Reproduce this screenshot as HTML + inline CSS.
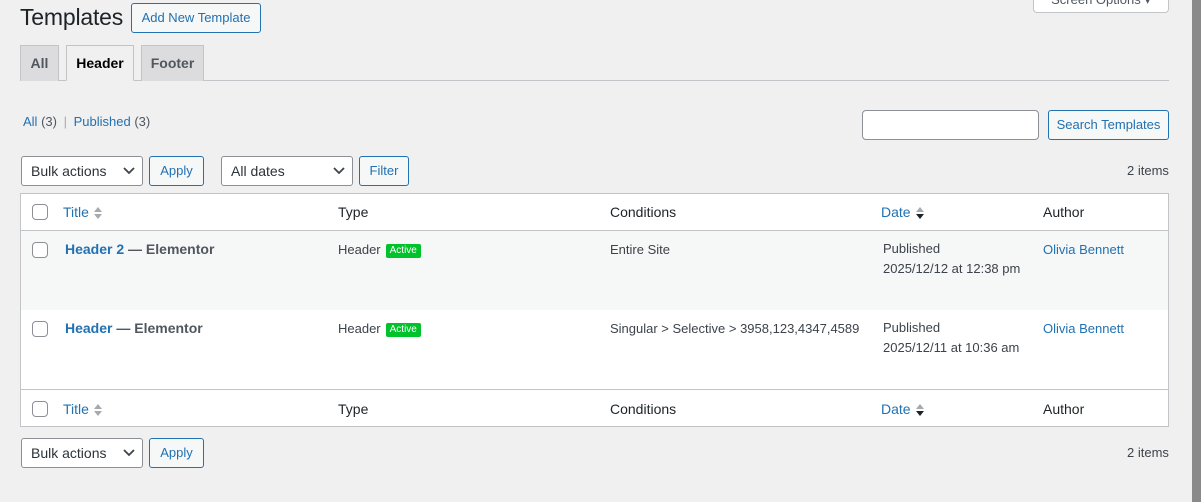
<!DOCTYPE html>
<html><head><meta charset="utf-8"><style>
*{box-sizing:border-box;margin:0;padding:0}
body{width:1201px;height:502px;background:#f0f0f1;font-family:"Liberation Sans",sans-serif;font-size:13px;color:#3c434a;position:relative;overflow:hidden}
.a{position:absolute;white-space:nowrap}
.btn{position:absolute;border:1px solid #2271b1;color:#2271b1;background:#f6f7f7;border-radius:3px;text-align:center;font-size:13px}
.sel{position:absolute;border:1px solid #8c8f94;background:#fff;border-radius:3px;color:#2c3338;font-size:14px;padding-left:9px}
.sel svg{position:absolute;right:7px;top:10px}
.link{color:#2271b1}
.cb{position:absolute;width:16px;height:16px;border:1px solid #8c8f94;border-radius:4px;background:#fff}
.sort{display:inline-block;vertical-align:middle;margin-left:4px}
.badge{display:inline-block;background:#00c22a;color:#fff;font-size:10px;padding:2px 4px;border-radius:2px;margin-left:5px;vertical-align:1px;line-height:10px}
</style></head><body>
<div class="a" style="left:20px;top:4px;font-size:23px;color:#1d2327;letter-spacing:-0.2px">Templates</div>
<div class="btn" style="left:131px;top:3px;width:130px;height:30px;line-height:28px;background:#f6f7f7">Add New Template</div>
<div class="a" style="left:1033px;top:-8px;width:136px;height:21px;background:#fff;border:1px solid #c3c4c7;border-radius:0 0 4px 4px;color:#50575e;text-align:center;line-height:14px">Screen Options ▾</div>
<div class="a" style="left:1187px;top:0;width:5px;height:502px;background:#f0f0f0"></div>
<div class="a" style="left:1192px;top:0;width:9px;height:502px;background:#8a8a8a"></div>

<div class="a" style="left:20px;top:80px;width:1149px;height:1px;background:#c3c4c7"></div>
<div class="a" style="left:20px;top:45px;width:39px;height:36px;background:#dcdcde;border:1px solid #c3c4c7;border-bottom:none;font-weight:bold;font-size:14px;color:#50575e;text-align:center;line-height:34px">All</div>
<div class="a" style="left:66px;top:45px;width:68px;height:36px;background:#f0f0f1;border:1px solid #c3c4c7;border-bottom:1px solid #f0f0f1;font-weight:bold;font-size:14px;color:#000;text-align:center;line-height:34px">Header</div>
<div class="a" style="left:141px;top:45px;width:63px;height:36px;background:#dcdcde;border:1px solid #c3c4c7;border-bottom:none;font-weight:bold;font-size:14px;color:#50575e;text-align:center;line-height:34px">Footer</div>

<div class="a" style="left:23px;top:114px"><span class="link">All</span> <span style="color:#50575e">(3)</span> <span style="color:#a7aaad;margin:0 3px">|</span> <span class="link">Published</span> <span style="color:#50575e">(3)</span></div>
<div class="a" style="left:862px;top:110px;width:177px;height:30px;background:#fff;border:1px solid #8c8f94;border-radius:4px"></div>
<div class="btn" style="left:1048px;top:110px;width:121px;height:30px;line-height:28px">Search Templates</div>

<div class="sel" style="left:21px;top:156px;width:122px;height:30px;line-height:28px">Bulk actions<svg width="12" height="8"><path d="M1 1l5 5 5-5" stroke="#3c434a" stroke-width="1.8" fill="none"/></svg></div>
<div class="btn" style="left:149px;top:156px;width:55px;height:30px;line-height:28px">Apply</div>
<div class="sel" style="left:221px;top:156px;width:132px;height:30px;line-height:28px">All dates<svg width="12" height="8"><path d="M1 1l5 5 5-5" stroke="#3c434a" stroke-width="1.8" fill="none"/></svg></div>
<div class="btn" style="left:359px;top:156px;width:50px;height:30px;line-height:28px">Filter</div>
<div class="a" style="left:1127px;top:163px">2 items</div>

<div class="a" style="left:20px;top:193px;width:1149px;height:234px;background:#fff;border:1px solid #c3c4c7"></div>
<div class="a" style="left:21px;top:230px;width:1147px;height:1px;background:#c3c4c7"></div>
<div class="a" style="left:21px;top:231px;width:1147px;height:79px;background:#f6f7f7"></div>
<div class="a" style="left:21px;top:389px;width:1147px;height:1px;background:#c3c4c7"></div>

<div class="cb" style="left:32px;top:204px"></div>
<div class="a link" style="left:63px;top:204px;font-size:14px">Title<svg class="sort" width="10" height="14"><path d="M1 6l4-5 4 5z M1 8l4 5 4-5z" fill="#a7aaad"/></svg></div>
<div class="a" style="left:338px;top:204px;font-size:14px;color:#1d2327">Type</div>
<div class="a" style="left:610px;top:204px;font-size:14px;color:#1d2327">Conditions</div>
<div class="a link" style="left:881px;top:204px;font-size:14px">Date<svg class="sort" width="10" height="14"><path d="M1 6l4-5 4 5z" fill="#a7aaad"/><path d="M1 8l4 5 4-5z" fill="#1d2327"/></svg></div>
<div class="a" style="left:1043px;top:204px;font-size:14px;color:#1d2327">Author</div>

<div class="cb" style="left:32px;top:242px"></div>
<div class="a" style="left:65px;top:241px;font-size:14px;font-weight:bold;color:#50575e"><span class="link">Header 2</span> — Elementor</div>
<div class="a" style="left:338px;top:242px">Header<span class="badge">Active</span></div>
<div class="a" style="left:610px;top:242px">Entire Site</div>
<div class="a" style="left:883px;top:239px;line-height:20px">Published<br>2025/12/12 at 12:38 pm</div>
<div class="a link" style="left:1043px;top:242px">Olivia Bennett</div>

<div class="cb" style="left:32px;top:321px"></div>
<div class="a" style="left:65px;top:320px;font-size:14px;font-weight:bold;color:#50575e"><span class="link">Header</span> — Elementor</div>
<div class="a" style="left:338px;top:321px">Header<span class="badge">Active</span></div>
<div class="a" style="left:610px;top:321px">Singular &gt; Selective &gt; 3958,123,4347,4589</div>
<div class="a" style="left:883px;top:318px;line-height:20px">Published<br>2025/12/11 at 10:36 am</div>
<div class="a link" style="left:1043px;top:321px">Olivia Bennett</div>

<div class="cb" style="left:32px;top:401px"></div>
<div class="a link" style="left:63px;top:401px;font-size:14px">Title<svg class="sort" width="10" height="14"><path d="M1 6l4-5 4 5z M1 8l4 5 4-5z" fill="#a7aaad"/></svg></div>
<div class="a" style="left:338px;top:401px;font-size:14px;color:#1d2327">Type</div>
<div class="a" style="left:610px;top:401px;font-size:14px;color:#1d2327">Conditions</div>
<div class="a link" style="left:881px;top:401px;font-size:14px">Date<svg class="sort" width="10" height="14"><path d="M1 6l4-5 4 5z" fill="#a7aaad"/><path d="M1 8l4 5 4-5z" fill="#1d2327"/></svg></div>
<div class="a" style="left:1043px;top:401px;font-size:14px;color:#1d2327">Author</div>

<div class="sel" style="left:21px;top:438px;width:122px;height:30px;line-height:28px">Bulk actions<svg width="12" height="8"><path d="M1 1l5 5 5-5" stroke="#3c434a" stroke-width="1.8" fill="none"/></svg></div>
<div class="btn" style="left:149px;top:438px;width:55px;height:30px;line-height:28px">Apply</div>
<div class="a" style="left:1127px;top:445px">2 items</div>
</body></html>
